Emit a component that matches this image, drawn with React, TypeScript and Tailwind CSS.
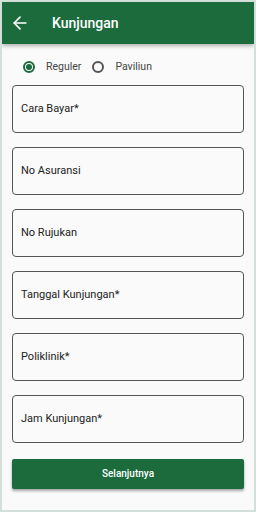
import { ArrowLeft } from "lucide-react";

const fields = [
  "Cara Bayar*",
  "No Asuransi",
  "No Rujukan",
  "Tanggal Kunjungan*",
  "Poliklinik*",
  "Jam Kunjungan*",
];

function Radio({ checked, label }: { checked?: boolean; label: string }) {
  return (
    <div className="flex items-center gap-[11px]">
      <div
        className={`flex size-[12px] items-center justify-center rounded-full border-2 ${
          checked ? "border-[#1b6b3c]" : "border-[#555]"
        }`}
      >
        {checked && <div className="size-[6px] rounded-full bg-[#1b6b3c]" />}
      </div>
      <span className="text-[10.5px] text-[#444]">{label}</span>
    </div>
  );
}

export default function App() {
  return (
    <div
      className="flex h-[512px] w-[256px] flex-col overflow-hidden border-2 border-[#d3e0da] bg-[#fafafa]"
      style={{ fontFamily: "Roboto, 'Liberation Sans', sans-serif" }}
    >
      {/* Header */}
      <div className="z-10 flex h-[42px] shrink-0 items-center bg-[#1b6b3c] px-[8px] shadow-[0_2px_4px_rgba(0,0,0,0.3)]">
        <ArrowLeft className="size-[20px] text-white" strokeWidth={2} />
        <span className="ml-[22px] text-[14px] font-medium text-white">Kunjungan</span>
      </div>

      {/* Radio row */}
      <div className="flex items-center gap-[11px] px-[21px] pt-[15px]">
        <Radio checked label="Reguler" />
        <Radio label="Paviliun" />
      </div>

      {/* Fields */}
      <div className="mt-[10px] flex flex-col gap-[14px] px-[10px]">
        {fields.map((f) => (
          <div
            key={f}
            className="flex h-[48px] items-center rounded-[4px] border border-[#555] bg-[#fafafa] px-[8px] text-[11px] text-[#222]"
          >
            {f}
          </div>
        ))}
      </div>

      <div className="mt-[16px] px-[10px]">
        <button className="flex h-[30px] w-full items-center justify-center rounded-[2px] bg-[#1b6b3c] text-[10px] font-medium text-white shadow-[0_2px_3px_rgba(0,0,0,0.35)]">
          Selanjutnya
        </button>
      </div>
    </div>
  );
}
